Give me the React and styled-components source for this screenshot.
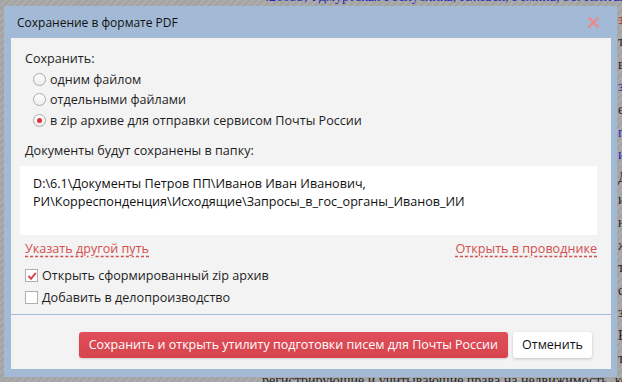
import React, { useState } from "react"
import styled, { createGlobalStyle } from "styled-components"

const GlobalStyle = createGlobalStyle`
  html, body {
    margin: 0;
    padding: 0;
    width: 622px;
    height: 382px;
    overflow: hidden;
    background: repeating-linear-gradient(
      135deg,
      #a4a4a4 0 3px,
      #acacac 3px 5px
    );
  }
`

const docLines = [
  { text: "426033, Удмуртская Республика, Ижевск, Ремина, 51. Контактный телефон: 8(3412)", tone: "blue" },
  { text: "з", tone: "red", short: true },
  { text: "т", short: true },
  { text: "в", short: true },
  { text: "з", tone: "blue", short: true },
  { text: "е", short: true },
  { text: "п", tone: "blue", short: true },
  { text: "и", tone: "blue", short: true },
  { text: "Д", short: true },
  { text: "и", short: true },
  { text: "н", short: true },
  { text: "ж", short: true },
  { text: "т", short: true },
  { text: "с", short: true },
  { text: "з", short: true },
  { text: "Е", short: true },
  { text: "т", short: true },
  { text: "регистрирующие и учитывающие права на недвижимость, корп" },
]

const Check = () => (
  <svg width="10" height="10" viewBox="0 0 10 10">
    <path d="M1.5 5 L4 7.8 L8.8 1.8" fill="none" stroke="#d9434f" strokeWidth="2" />
  </svg>
)

const App = () => {
  const [mode, setMode] = useState("zip")
  const [openZip, setOpenZip] = useState(true)
  const [addDoc, setAddDoc] = useState(false)

  return (
    <>
      <GlobalStyle />
      <Page>
        {docLines.map((l, i) => (
          <DocLine key={i} $tone={l.tone} $short={l.short}>{l.text}</DocLine>
        ))}
      </Page>
      <Dialog>
        <TitleBar>
          <Title>Сохранение в формате PDF</Title>
          <Close aria-label="Закрыть">
            <svg width="11" height="11" viewBox="0 0 11 11">
              <path d="M1 1 L10 10 M10 1 L1 10" stroke="#ec8a8a" strokeWidth="2.2" strokeLinecap="square" />
            </svg>
          </Close>
        </TitleBar>
        <Body>
          <Label>Сохранить:</Label>
          <Radios>
            <RadioRow onClick={() => setMode("one")}>
              <RadioCircle $checked={mode === "one"} />
              одним файлом
            </RadioRow>
            <RadioRow onClick={() => setMode("many")}>
              <RadioCircle $checked={mode === "many"} />
              отдельными файлами
            </RadioRow>
            <RadioRow onClick={() => setMode("zip")}>
              <RadioCircle $checked={mode === "zip"} />
              в zip архиве для отправки сервисом Почты России
            </RadioRow>
          </Radios>
          <FolderLabel>Документы будут сохранены в папку:</FolderLabel>
          <PathBox>
            D:\6.1\Документы Петров ПП\Иванов Иван Иванович,
            <br />
            РИ\Корреспонденция\Исходящие\Запросы_в_гос_органы_Иванов_ИИ
          </PathBox>
          <Links>
            <DashLink>Указать другой путь</DashLink>
            <DashLink>Открыть в проводнике</DashLink>
          </Links>
          <Checks>
            <CheckRow onClick={() => setOpenZip(!openZip)}>
              <CheckBox>{openZip && <Check />}</CheckBox>
              Открыть сформированный zip архив
            </CheckRow>
            <CheckRow onClick={() => setAddDoc(!addDoc)}>
              <CheckBox>{addDoc && <Check />}</CheckBox>
              Добавить в делопроизводство
            </CheckRow>
          </Checks>
          <Footer>
            <PrimaryButton>Сохранить и открыть утилиту подготовки писем для Почты России</PrimaryButton>
            <CancelButton>Отменить</CancelButton>
          </Footer>
        </Body>
      </Dialog>
    </>
  )
}

const Page = styled.div`
  padding: 0 0 0 262px;
  margin-top: -14px;
  font-family: "Liberation Serif", serif;
  font-size: 14px;
  line-height: 22.6px;
  white-space: nowrap;
`

const DocLine = styled.div`
  color: ${({ $tone }) => ($tone === "blue" ? "#2424b8" : $tone === "red" ? "#b82424" : "#262626")};
  padding-left: ${({ $short }) => ($short ? "356px" : "0")};
`

const Dialog = styled.div`
  position: fixed;
  left: 4px;
  top: 6px;
  width: 613px;
  height: 371px;
  box-sizing: border-box;
  background: #a3bad6;
  padding: 0 6px 8px 7px;
  display: flex;
  flex-direction: column;
  font-family: "Open Sans", "Noto Sans", sans-serif;
  color: #1e1e1e;
`

const TitleBar = styled.div`
  height: 32px;
  flex: none;
  display: flex;
  align-items: center;
  justify-content: space-between;
  padding: 0 12px 0 6px;
`

const Title = styled.div`
  font-size: 12px;
  color: #111;
`

const Close = styled.button`
  border: none;
  background: none;
  padding: 0;
  width: 11px;
  height: 11px;
  display: flex;
  cursor: pointer;
`

const Body = styled.div`
  flex: 1;
  background: #f3f3f3;
  display: flex;
  flex-direction: column;
  padding: 12px 14px 0 14px;
  font-size: 12.6px;
`

const Label = styled.div`
  line-height: 18px;
`

const Radios = styled.div`
  display: flex;
  flex-direction: column;
  padding-left: 8px;
  margin-top: 1px;
`

const RadioRow = styled.label`
  display: flex;
  align-items: center;
  gap: 4px;
  height: 20.5px;
  cursor: pointer;
`

const RadioCircle = styled.span`
  width: 11px;
  height: 11px;
  border-radius: 50%;
  border: 1px solid #ababab;
  background: linear-gradient(#ffffff, #ececec);
  display: flex;
  align-items: center;
  justify-content: center;
  &::after {
    content: "";
    width: 5px;
    height: 5px;
    border-radius: 50%;
    background: #e0323c;
    display: ${({ $checked }) => ($checked ? "block" : "none")};
  }
`

const FolderLabel = styled.div`
  margin-top: 11px;
  line-height: 18px;
`

const PathBox = styled.div`
  margin: 6px 0 0 -5px;
  height: 69px;
  box-sizing: border-box;
  background: #fff;
  padding: 9px 13px;
  line-height: 18px;
  color: #111;
`

const Links = styled.div`
  display: flex;
  justify-content: space-between;
  margin-top: 5px;
  line-height: 18px;
`

const DashLink = styled.a`
  color: #d34e4e;
  text-decoration: underline dashed #d34e4e;
  text-underline-offset: 3px;
  cursor: pointer;
`

const Checks = styled.div`
  display: flex;
  flex-direction: column;
  margin-top: 7px;
`

const CheckRow = styled.label`
  display: flex;
  align-items: center;
  gap: 4px;
  height: 22px;
  cursor: pointer;
`

const CheckBox = styled.span`
  width: 11px;
  height: 11px;
  border: 1px solid #b0b0b0;
  background: #fff;
  display: flex;
  align-items: center;
  justify-content: center;
`

const Footer = styled.div`
  margin: 5px -14px 0;
  border-top: 1px solid #a3bad6;
  padding: 17px 19px 0 0;
  display: flex;
  justify-content: flex-end;
  gap: 5px;
`

const PrimaryButton = styled.button`
  height: 26px;
  padding: 0 10px;
  border: none;
  border-radius: 3px;
  background: linear-gradient(#e0505a, #d6434c);
  color: #fff;
  font-family: "Open Sans", "Noto Sans", sans-serif;
  font-size: 12.5px;
  box-shadow: 0 1px 2px rgba(0, 0, 0, 0.15);
  cursor: pointer;
`

const CancelButton = styled.button`
  height: 26px;
  width: 79px;
  border: none;
  border-radius: 3px;
  background: #fff;
  color: #111;
  font-family: "Open Sans", "Noto Sans", sans-serif;
  font-size: 12.5px;
  box-shadow: 0 1px 3px rgba(0, 0, 0, 0.2);
  cursor: pointer;
`

export default App
